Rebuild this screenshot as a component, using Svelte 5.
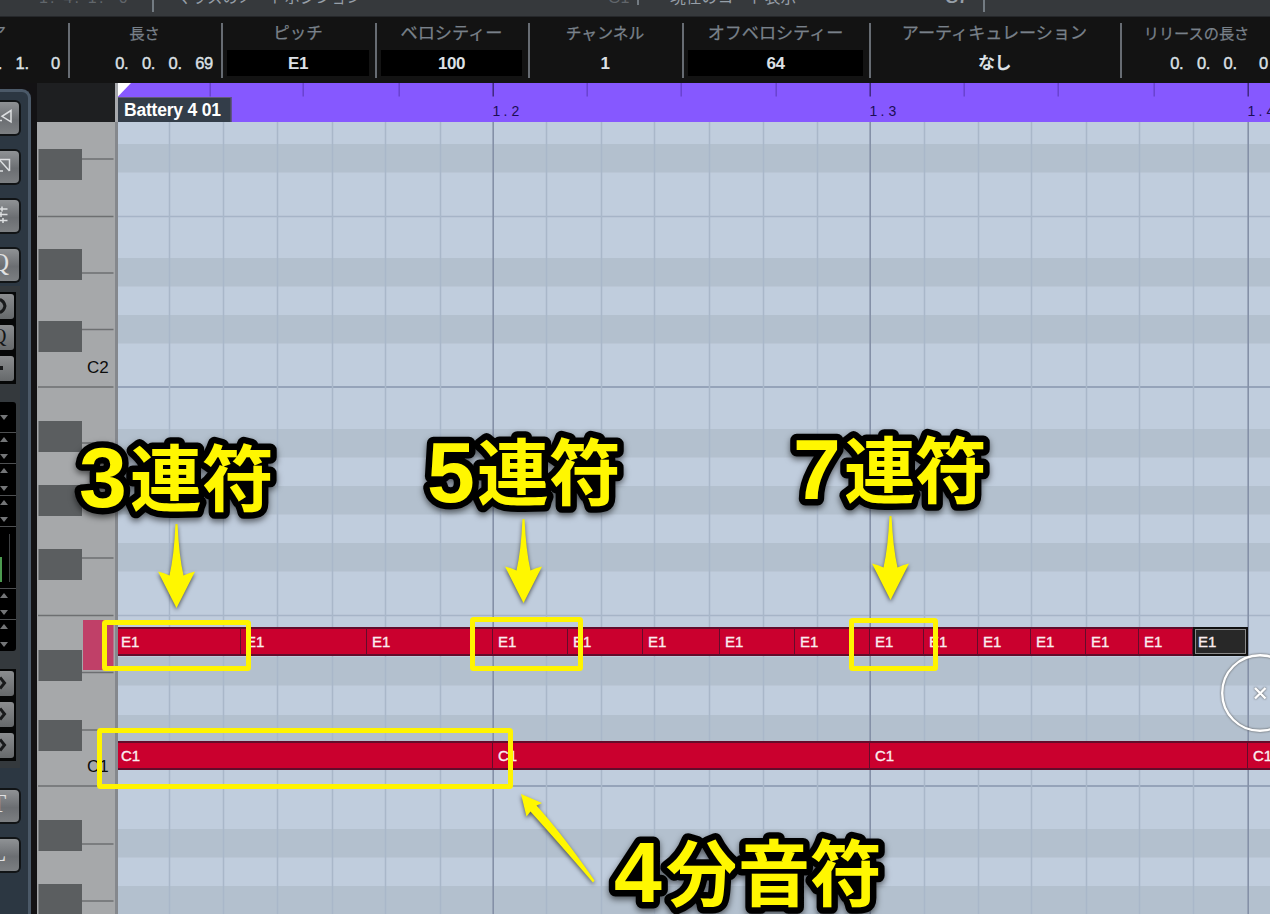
<script>
  const fields = [
    { label: "エンドア", value: "1. 1.  0", width: 70, cells: true, first: true },
    { label: "長さ", value: "0. 0. 0. 69", width: 153, cells: true, size: 15.3 },
    { label: "ピッチ", value: "E1", width: 154, box: true, size: 16.5 },
    { label: "ベロシティー", value: "100", width: 153, box: true, size: 17.2 },
    { label: "チャンネル", value: "1", width: 154, size: 15.8 },
    { label: "オフベロシティー", value: "64", width: 187, box: true, size: 17.1 },
    { label: "アーティキュレーション", value: "なし", width: 251, size: 17.1 },
    { label: "リリースの長さ", value: "0. 0. 0.  0", width: 153, cells: true, size: 15.2 },
  ];

  const ticks = [210, 303, 399, 493, 587, 681, 776, 870, 964, 1058, 1154, 1248];
  const beats = [493, 870, 1248];
  const gridX = [
    169, 223, 277, 332, 385, 440, 546, 601, 654, 709, 763, 817, 924, 978, 1031,
    1086, 1139, 1193,
  ];
  const bands = [144, 258, 315, 429, 486, 543, 657, 715, 829, 886];

  const blackKeys = [149, 249, 321, 421, 485, 549, 650, 720, 820, 884];
  const shortLines = [159, 273, 329.5, 443, 501, 558, 672.5, 730, 844, 901];
  const longLines = [216.5, 387, 615.5, 786];

  const eEdges = [
    116, 241, 367, 493, 568, 643, 720, 795, 870, 924, 978, 1031, 1086, 1139,
    1193, 1248,
  ];
  const cEdges = [116, 493, 870, 1248, 1625];

  function toNotes(edges) {
    return edges.slice(1).map((end, i) => end - edges[i]);
  }

  const lanes = [
    { name: "E1", top: 544, notes: toNotes(eEdges), selected: 14 },
    { name: "C1", top: 658, notes: toNotes(cEdges), selected: -1 },
  ];

  const callouts = [
    { digit: "3", x: 79, y: 507, kanji: "連符", kx: "130 202", ky: 504.5 },
    { digit: "5", x: 427, y: 502, kanji: "連符", kx: "477 549", ky: 499 },
    { digit: "7", x: 793, y: 499, kanji: "連符", kx: "844 915", ky: 497 },
    { digit: "4", x: 614, y: 902, kanji: "分音符", kx: "666 738 810", ky: 900 },
  ];
  const arrows = [
    [176.5, 608],
    [523.5, 603],
    [890.5, 600],
  ];
  const frames = [
    [102, 620, 149, 51],
    [470, 617, 113, 54],
    [849, 618, 89, 53],
    [97, 728, 416, 61],
  ];
</script>

<main>
  <header class="strip">
    <span class="dim pos">1. 4. 1.  0</span>
    <i></i>
    <span class="mouse">マウスのノートポジション</span>
    <span class="dim note">G1</span>
    <i class="short"></i>
    <span class="chord">現在のコード表示</span>
    <b>G7</b>
    <i></i>
  </header>

  <div class="info">
    {#each fields as f}
      <div class="field" class:first={f.first} style="width: {f.width}px">
        <div class="label" style="font-size: {f.size || 16}px">{f.label}</div>
        {#if f.cells}
          <div class="value cells">
            {#each f.value.split("") as c}<span>{c}</span>{/each}
          </div>
        {:else}
          <div class="value" class:box={f.box}>{f.value}</div>
        {/if}
      </div>
    {/each}
  </div>

  <div class="body">
    <aside>
      <div class="panel">
        <div class="big">
          <svg width="20" height="34"><path d="M11 8.500v11.500L2 14.300zM0 18.500h2" /></svg>
        </div>
        <div class="big">
          <svg width="20" height="34"><path d="M0 8.500h9.500v11.500M0 9.500l9.500 10.500M0 20h3" /></svg>
        </div>
        <div class="big">
          <svg width="20" height="34">
            <path d="M0 9h7.500M0 14.500h7.500M0 20.500h7.500" stroke-width="1.800" />
            <path d="M2 6.500v5M1 12v5M3 18v5" stroke-width="3" />
          </svg>
        </div>
        <div class="big"><span>Q</span></div>
        <div class="lower">
          <div class="group">
            <div class="small"><svg width="14" height="24"><path class="chev" d="M0 5.500Q4 7 5 12Q4 17 0 18.500" /></svg></div>
            <div class="small"><span>Q</span></div>
            <div class="small"><svg width="14" height="24"><path class="dot" d="M0 10h3v4H0z" /></svg></div>
          </div>
          <div class="list">
            <div class="item one"><em></em></div>
            <div class="item"><em class="up"></em><em></em></div>
            <div class="item"><em class="up"></em><em></em></div>
            <div class="item"><em class="up"></em><em></em></div>
            <div class="meter"><div></div><div></div></div>
            <div class="item"><em class="up"></em><em></em></div>
            <div class="item last"><em class="up"></em><em></em></div>
          </div>
          <div class="group">
            {#each [0, 1, 2] as n}
              <div class="small">
                <svg width="14" height="24">
                  <path class="chev" d="M0 6.500L4.500 12L0 17.500" />
                </svg>
              </div>
            {/each}
          </div>
        </div>
        <div class="big"><span>T</span></div>
        <div class="big"><span>L</span></div>
      </div>
    </aside>

    <div class="keys">
      <svg width="78" height="831" viewBox="37 83 78 831">
        <rect x="37" y="83" width="78" height="39" fill="#1e1f21" />
        <rect x="37" y="122" width="78" height="792" fill="#a6a8aa" />
        {#each blackKeys as y}
          <rect x="38.500" {y} width="43.500" height="31" fill="#5b5e60" />
        {/each}
        {#each shortLines as y}
          <path d="M82 {y}H113.500" stroke="#6d6f71" stroke-width="1.500" />
        {/each}
        {#each longLines as y}
          <path d="M38 {y}H113.500" stroke="#6d6f71" stroke-width="1.500" />
        {/each}
        <rect x="83" y="620" width="30.500" height="50" fill="#c04068" />
        <text x="87" y="372.500">C2</text>
        <text x="87" y="771.500">C1</text>
      </svg>
    </div>

    <div class="editor">
      <svg class="grid" width="1155" height="831" viewBox="115 83 1155 831">
        <rect x="115" y="83" width="1155" height="831" fill="#c0cddd" />
        {#each bands as y}
          <rect x="118" {y} width="1152" height="28.500" fill="#b3c0ce" />
        {/each}
        <path d="M118 216.500H1270M118 615.500H1270" stroke="#a6b4c7" stroke-width="1.500" />
        <path d="M118 387H1270M118 786H1270" stroke="#95a3b9" stroke-width="1.800" />
        {#each gridX as x}
          <path d="M{x + 0.5} 122V914" stroke="#a9b7c9" stroke-width="1.500" />
        {/each}
        {#each beats as x}
          <path d="M{x + 0.2} 122V914" stroke="#8490a7" stroke-width="1.600" />
        {/each}
        <rect x="115" y="83" width="1155" height="39" fill="#8658ff" />
        {#each ticks as x}
          <path
            d="M{x + 0.2} 83V96.500"
            stroke={beats.includes(x) ? "#3a2575" : "#6741cc"}
            stroke-width="1.400"
          />
        {/each}
        {#each beats as x, i}
          <text class="beat" x="{x - 0.5} {x + 10.5} {x + 18.5}" y="115.500">1.{i + 2}</text>
        {/each}
        <rect x="115" y="83" width="3" height="39" fill="#a7a9ad" />
        <rect x="115" y="122" width="3" height="792" fill="#85888d" />
        <path d="M118 83H131L118 96.500z" fill="#fff" />
        <rect x="118" y="97" width="113.500" height="25" fill="#333d49" />
        <path d="M118 97.500H231V122" fill="none" stroke="#635a78" />
        <text class="part" x="124" y="115.500" textLength="97">Battery 4 01</text>
      </svg>

      {#each lanes as lane}
        <div class="lane" style="top: {lane.top}px">
          {#each lane.notes as width, i}
            <div class="clip" class:selected={i === lane.selected} style="width: {width}px">
              {lane.name}
            </div>
          {/each}
        </div>
      {/each}
    </div>
  </div>

  <svg class="overlay" width="1270" height="914">
    <g class="cursor">
      <circle cx="1260" cy="693" r="37.800" />
      <path d="M1255 688l10.500 10.500M1265.500 688L1255 698.500" />
    </g>
    {#each frames as [x, y, w, h]}
      <rect class="frame" x={x + 2.5} y={y + 2.5} width={w - 5} height={h - 5} rx="1" />
    {/each}
    <g class="arrows">
      {#each arrows as [x, y]}
        <path
          transform="translate({x} {y})"
          d="M0 0L-18.500-36.500Q-12-35-7-32.500Q-2.500-52-1-84H1Q2.500-52 7-32.500Q12-35 18.500-36.500z"
        />
      {/each}
      <path d="M521 794L542 803L536.500 805.500Q563 835 594.500 880.500L593 882.500Q558 842 530.500 811.500L526.500 816.500z" />
    </g>
    <g class="callouts">
      {#each callouts as c}
        <text>
          <tspan class="digit" x={c.x} y={c.y}>{c.digit}</tspan><tspan
            x={c.kx}
            y={c.ky}>{c.kanji}</tspan>
        </text>
      {/each}
    </g>
  </svg>
</main>

<style>
  :global(body) {
    background: #131313;
    overflow: hidden;
  }
  main {
    position: relative;
    width: 1270px;
    height: 914px;
    overflow: hidden;
    background: #131313;
    font-family: "Liberation Sans", "Noto Sans CJK JP", sans-serif;
  }

  .strip {
    display: flex;
    height: 16px;
    overflow: hidden;
    background: #36393c;
    border-bottom: 1px solid #25272a;
    color: #969fa8;
    font-size: 16px;
    line-height: 20px;
    white-space: pre;
  }
  .strip span,
  .strip b {
    flex: none;
    margin-top: -12px;
  }
  .strip i {
    width: 2px;
    height: 12px;
    background: #737b82;
    flex: none;
  }
  .strip .short {
    height: 5px;
  }
  .strip .dim {
    color: #61666b;
  }
  .strip .pos {
    width: 113px;
    padding-left: 39px;
    letter-spacing: 2.2px;
  }
  .strip .mouse {
    width: 430px;
    padding-left: 22px;
    font-size: 15.500px;
  }
  .strip .note {
    width: 29px;
    margin-left: 2px;
  }
  .strip .chord {
    width: 275px;
    padding-left: 31px;
    box-sizing: border-box;
    margin-right: 0;
    font-size: 15.800px;
  }
  .strip .chord + b {
    margin-left: 31px;
  }
  .strip b {
    width: 38px;
    font-size: 17px;
  }

  .info {
    display: flex;
    height: 55px;
    padding: 6px 0 5px;
  }
  .field {
    flex: none;
    box-sizing: border-box;
    border-right: 2px solid #676c73;
    white-space: nowrap;
  }
  .label {
    height: 27px;
    margin-left: -2px;
    line-height: 21px;
    color: #79818a;
    text-align: center;
    -webkit-text-stroke: 0.25px #79818a;
  }
  .first .label {
    display: flex;
    justify-content: flex-end;
    margin-left: -64px;
    width: 70px;
  }
  .value {
    height: 26px;
    margin: 0 6px 0 4px;
    line-height: 28px;
    color: #dde1e6;
    font-size: 17px;
    font-weight: bold;
    letter-spacing: -0.4px;
    text-align: center;
  }
  .box {
    background: #000;
  }
  .cells {
    display: flex;
    justify-content: flex-end;
    margin: 0 8px 0 0;
    font-size: 16.500px;
    font-weight: normal;
    letter-spacing: 0;
    line-height: 26px;
    text-align: left;
    white-space: pre;
    -webkit-text-stroke: 0.4px #dde1e6;
  }
  .cells span {
    flex: none;
    width: 8.900px;
  }
  .field:last-child .cells {
    margin-right: 5px;
  }

  .body {
    display: flex;
    height: 831px;
  }
  aside {
    width: 37px;
    flex: none;
    padding-top: 6px;
    box-sizing: border-box;
    background: #131214;
  }
  .panel {
    width: 31px;
    height: 830px;
    box-sizing: border-box;
    padding-top: 8px;
    background: #2c3742;
    border: solid #4b5968;
    border-width: 3px 3px 0 0;
    border-radius: 0 9px 0 0;
  }
  .big {
    width: 21px;
    height: 36px;
    margin-bottom: 13px;
    box-sizing: border-box;
    overflow: hidden;
    border: 2px solid #111416;
    border-left: 0;
    border-radius: 0 6px 6px 0;
    background: linear-gradient(#8f9295, #6b6e72 55%, #7c7f82);
  }
  .big:nth-child(4) {
    margin-bottom: 3px;
  }
  .big svg,
  .small svg {
    display: block;
  }
  .big path {
    fill: none;
    stroke: #dddfe1;
    stroke-width: 1.5;
  }
  .big span {
    display: block;
    margin-left: -9px;
    color: #e0e1e2;
    font: 25px/28px "Liberation Serif", serif;
  }
  .lower {
    width: 20px;
    height: 482px;
    margin-bottom: 20px;
    padding-top: 6px;
    box-sizing: border-box;
    background: #34393d;
  }
  .group {
    width: 16px;
    height: 92px;
    background: #060707;
    padding-top: 2px;
    box-sizing: border-box;
  }
  .small {
    width: 14px;
    height: 25px;
    margin-bottom: 6px;
    box-sizing: border-box;
    overflow: hidden;
    border-radius: 0 3px 3px 0;
    background: linear-gradient(#8b8d8f, #66696b);
  }
  .small .dot {
    fill: #191a1b;
  }
  .small .chev {
    fill: none;
    stroke: #191a1b;
    stroke-width: 3;
  }
  .small span {
    display: block;
    margin-left: -8px;
    color: #151617;
    font: 20px/22px "Liberation Serif", serif;
  }
  .list {
    width: 16px;
    height: 249px;
    margin: 18px 0;
    background: #000;
    border-radius: 0 3px 3px 0;
  }
  .item {
    display: flex;
    flex-direction: column;
    justify-content: space-between;
    height: 31.200px;
    box-sizing: border-box;
    padding: 4px 0 4px;
    border-bottom: 1.500px solid #4d4f51;
  }
  .one {
    justify-content: center;
  }
  .last {
    border: 0;
  }
  .item em {
    width: 0;
    border: 4.500px solid transparent;
    border-top: 5px solid #737577;
    border-bottom: 0;
  }
  .item .up {
    border-top: 0;
    border-bottom: 5px solid #737577;
  }
  .meter {
    display: flex;
    align-items: flex-end;
    gap: 7px;
    height: 62px;
    padding-bottom: 6px;
    box-sizing: border-box;
    border-bottom: 1.500px solid #4d4f51;
  }
  .meter div {
    width: 2px;
    height: 25px;
    background: #4c9b50;
  }
  .meter div + div {
    width: 1px;
    height: 48px;
    background: #3e4042;
  }

  .keys {
    width: 78px;
    flex: none;
  }
  .keys text {
    fill: #0c0c0c;
    font-size: 17px;
  }
  .editor {
    position: relative;
    flex: 1;
    overflow: hidden;
  }
  .grid,
  .keys svg {
    display: block;
  }
  .beat {
    fill: #1c0d55;
    font-size: 14px;
  }
  .part {
    fill: #fff;
    font-size: 17.500px;
    font-weight: bold;
  }
  .lane {
    position: absolute;
    left: 3px;
    display: flex;
    margin-left: -2px;
    clip-path: inset(0 0 0 2px);
  }
  .clip {
    flex: none;
    box-sizing: border-box;
    height: 29px;
    padding-left: 5px;
    border: solid #630c2b;
    border-width: 2px 1px 2px 0;
    background: #ca002e;
    color: #faeef0;
    font-size: 15px;
    line-height: 26px;
    -webkit-text-stroke: 0.35px #faeef0;
  }
  .selected {
    padding-left: 3px;
    border: 2px solid #101010;
    outline: 1px solid #8a8a8a;
    outline-offset: -3px;
    background: #282828;
  }

  .overlay {
    position: absolute;
    inset: 0;
  }
  .frame {
    fill: none;
    stroke: #fff400;
    stroke-width: 5;
  }
  .cursor {
    fill: none;
    stroke: #fff;
    stroke-width: 2.4;
    filter: drop-shadow(0 0 1px #555);
  }
  .arrows {
    fill: #fff700;
    filter: drop-shadow(0 2px 2px rgba(0, 0, 0, 0.6));
  }
  .callouts {
    fill: #fff700;
    stroke: #000;
    stroke-width: 13;
    stroke-linejoin: round;
    paint-order: stroke;
    font: bold 72px "Noto Sans CJK JP", sans-serif;
    filter: drop-shadow(0 3px 3px rgba(0, 0, 0, 0.55));
  }
  .digit {
    font-family: "Liberation Sans", sans-serif;
    font-size: 86px;
  }
</style>
